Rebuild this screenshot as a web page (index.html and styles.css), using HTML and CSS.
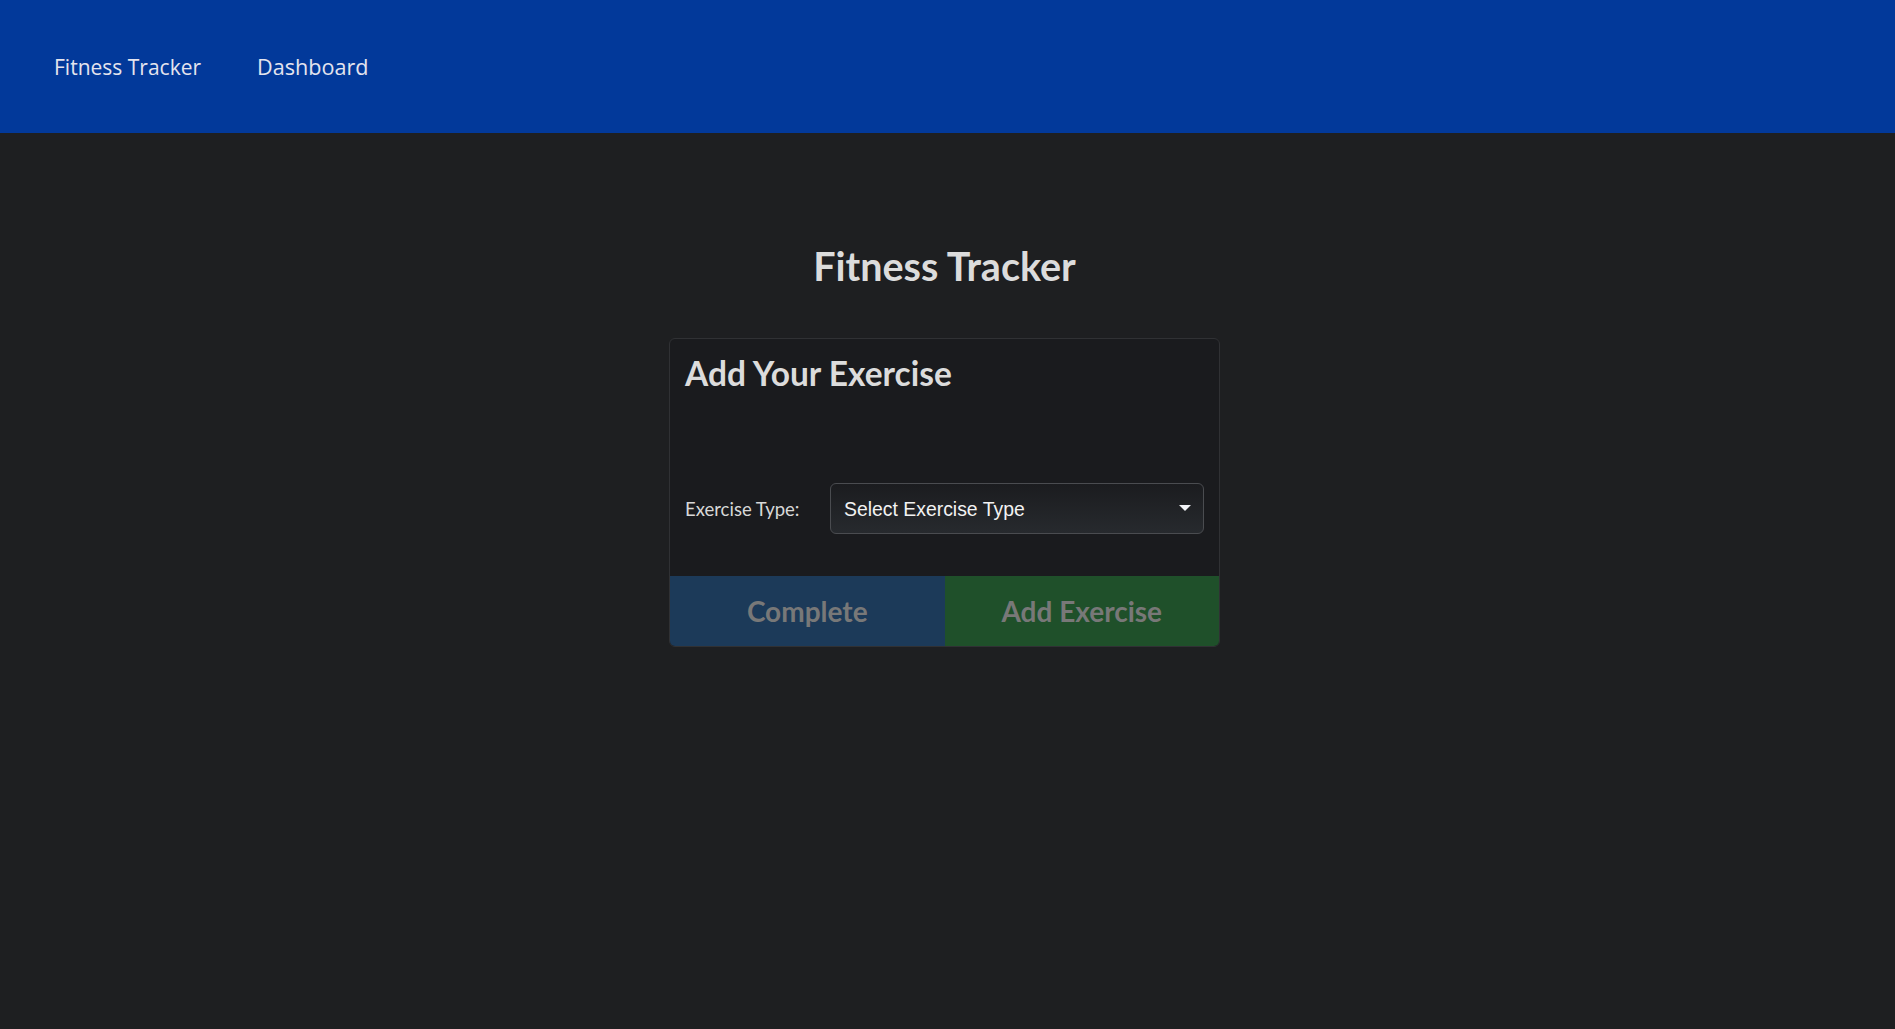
FILE: index.html
```html
<!DOCTYPE html>
<html lang="en">
<head>
<meta charset="utf-8">
<title>Fitness Tracker</title>
<link rel="stylesheet" href="styles.css">
</head>
<body>
<nav class="navbar">
  <a class="nav-brand" href="#">Fitness Tracker</a>
  <a class="nav-link" href="#">Dashboard</a>
</nav>
<main class="main">
  <h1 class="page-title">Fitness Tracker</h1>
  <section class="card">
    <div class="card-body">
      <h2 class="card-title">Add Your Exercise</h2>
      <div class="form-row">
        <label class="form-label" for="type">Exercise Type:</label>
        <div class="select-wrap">
          <select id="type" class="select">
            <option>Select Exercise Type</option>
          </select>
          <svg class="select-arrow" width="14" height="8" viewBox="0 0 14 8"><path d="M1 1 L13 1 L7 7 Z" fill="#f2f4f8"/></svg>
        </div>
      </div>
    </div>
    <div class="card-actions">
      <button class="btn btn-complete" disabled>Complete</button>
      <button class="btn btn-add" disabled>Add Exercise</button>
    </div>
  </section>
</main>
</body>
</html>
```
FILE: styles.css
```css
* { box-sizing: border-box; }
html, body { margin: 0; padding: 0; }
body {
  background: #1e1f21;
  color: #dcdcdc;
  font-family: Lato, "Liberation Sans", sans-serif;
  min-height: 1029px;
}
.navbar {
  height: 133px;
  background: #02399a;
  display: flex;
  align-items: center;
  padding-left: 54px;
  gap: 56px;
}
.navbar a {
  color: #e4e4ee;
  text-decoration: none;
  font-family: "Open Sans", "Noto Sans", sans-serif;
  font-size: 21px;
}
.navbar .nav-link {
  font-size: 21.6px;
}
.main {
  display: flex;
  flex-direction: column;
  align-items: center;
  padding-right: 6px;
  padding-top: 109px;
}
.page-title {
  margin: 0 0 48px;
  font-size: 39.5px;
  line-height: 48px;
  font-weight: 700;
  color: #dcdcdc;
}
.card {
  width: 551px;
  background: #1a1b1e;
  border: 1px solid #303134;
  border-radius: 6px;
  overflow: hidden;
}
.card-body {
  padding: 15px 15px 42px;
}
.card-title {
  margin: 0 0 90px;
  font-size: 33.5px;
  line-height: 39px;
  font-weight: 700;
  color: #dcdcdc;
}
.form-row {
  display: flex;
  align-items: center;
}
.form-label {
  width: 145px;
  flex: none;
  font-size: 18.5px;
  color: #d8d8d8;
  padding-top: 1px;
}
.select-wrap {
  position: relative;
  flex: 1;
}
.select {
  appearance: none;
  -webkit-appearance: none;
  width: 100%;
  height: 51px;
  border: 1px solid #4a4c50;
  border-radius: 6px;
  background: linear-gradient(#1b1c1f, #272a2e);
  color: #f2f2f2;
  font-family: "Liberation Sans", Arial, sans-serif;
  font-size: 19.4px;
  padding: 0 40px 0 13px;
  outline: none;
}
.select-arrow {
  position: absolute;
  right: 12px;
  top: 21px;
  pointer-events: none;
}
.card-actions {
  display: flex;
  height: 70px;
}
.btn {
  flex: 1;
  border: 0;
  margin: 0;
  font-family: Lato, sans-serif;
  font-weight: 700;
  font-size: 28px;
  color: #787878;
  padding: 0;
}
.btn-complete { background: #1c3a59; }
.btn-add { background: #1f502a; }
```
